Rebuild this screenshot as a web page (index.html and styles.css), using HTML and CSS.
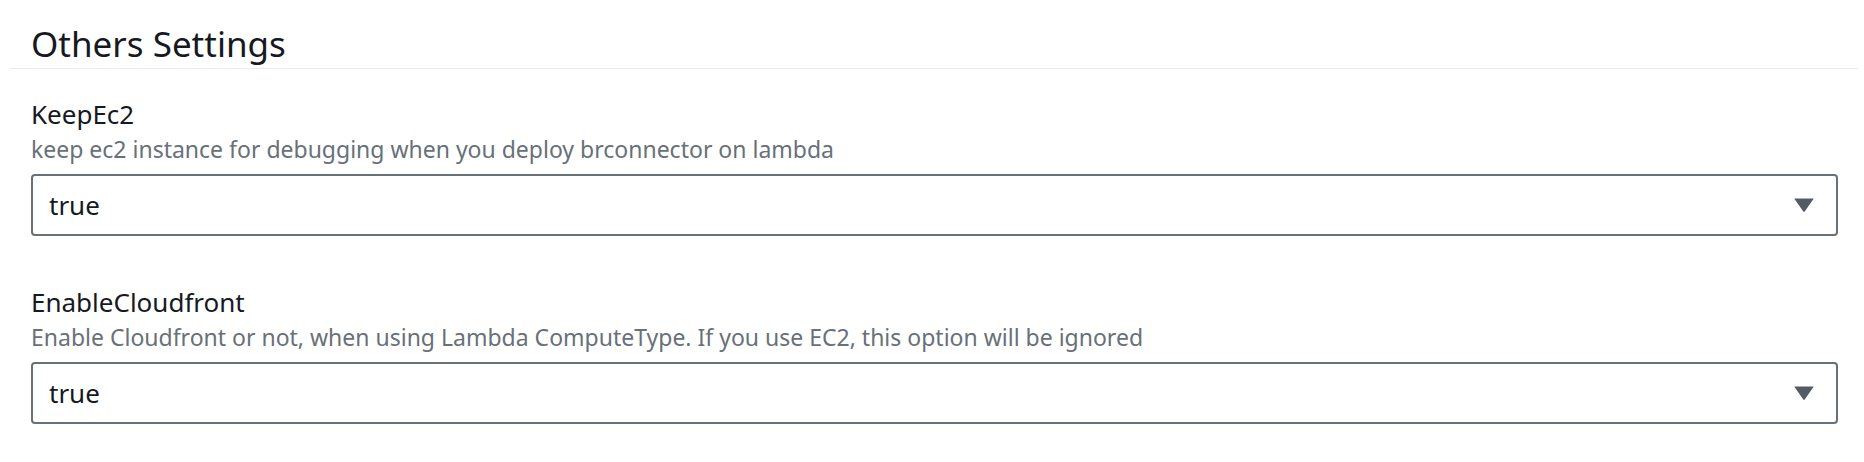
FILE: index.html
```html
<!DOCTYPE html>
<html lang="en">
<head>
<meta charset="utf-8">
<title>Others Settings</title>
<link rel="stylesheet" href="styles.css">
</head>
<body>
<section class="panel">
  <h2 class="title">Others Settings</h2>
  <div class="fields">
    <div class="field">
      <div class="label">KeepEc2</div>
      <div class="desc">keep ec2 instance for debugging when you deploy brconnector on lambda</div>
      <div class="select">
        <span class="value">true</span>
        <svg class="caret" width="20" height="16" viewBox="0 0 20 16"><path d="M1 1.5 L19 1.5 Q19.8 1.5 19.3 2.3 L10.7 14.6 Q10 15.5 9.3 14.6 L0.7 2.3 Q0.2 1.5 1 1.5 Z" fill="#545b64"/></svg>
      </div>
    </div>
    <div class="field">
      <div class="label">EnableCloudfront</div>
      <div class="desc">Enable Cloudfront or not, when using Lambda ComputeType. If you use EC2, this option will be ignored</div>
      <div class="select">
        <span class="value">true</span>
        <svg class="caret" width="20" height="16" viewBox="0 0 20 16"><path d="M1 1.5 L19 1.5 Q19.8 1.5 19.3 2.3 L10.7 14.6 Q10 15.5 9.3 14.6 L0.7 2.3 Q0.2 1.5 1 1.5 Z" fill="#545b64"/></svg>
      </div>
    </div>
  </div>
</section>
</body>
</html>
```
FILE: styles.css
```css
html, body {
  margin: 0;
  padding: 0;
  background: #ffffff;
}
body {
  font-family: "Noto Sans", "Open Sans", sans-serif;
  color: #16191f;
}
.panel {
  margin: 0 6px 0 10px;
  padding-top: 24px;
}
.title {
  margin: 0;
  padding: 0 0 4px 21px;
  font-size: 35px;
  line-height: 40px;
  font-weight: 400;
  color: #16191f;
  border-bottom: 1px solid #e9ebed;
}
.fields {
  display: flex;
  flex-direction: column;
  gap: 50px;
  padding: 29px 20px 0 21px;
}
.field {
  display: flex;
  flex-direction: column;
}
.label {
  font-size: 26px;
  line-height: 32px;
}
.desc {
  margin-top: 4px;
  font-size: 23px;
  line-height: 30px;
  color: #687078;
}
.select {
  margin-top: 10px;
  height: 62px;
  box-sizing: border-box;
  border: 2px solid #687078;
  border-radius: 4px;
  display: flex;
  align-items: center;
  justify-content: space-between;
  padding: 0 22px 0 16px;
}
.value {
  font-size: 26px;
  line-height: 32px;
}
.caret {
  display: block;
}
```
